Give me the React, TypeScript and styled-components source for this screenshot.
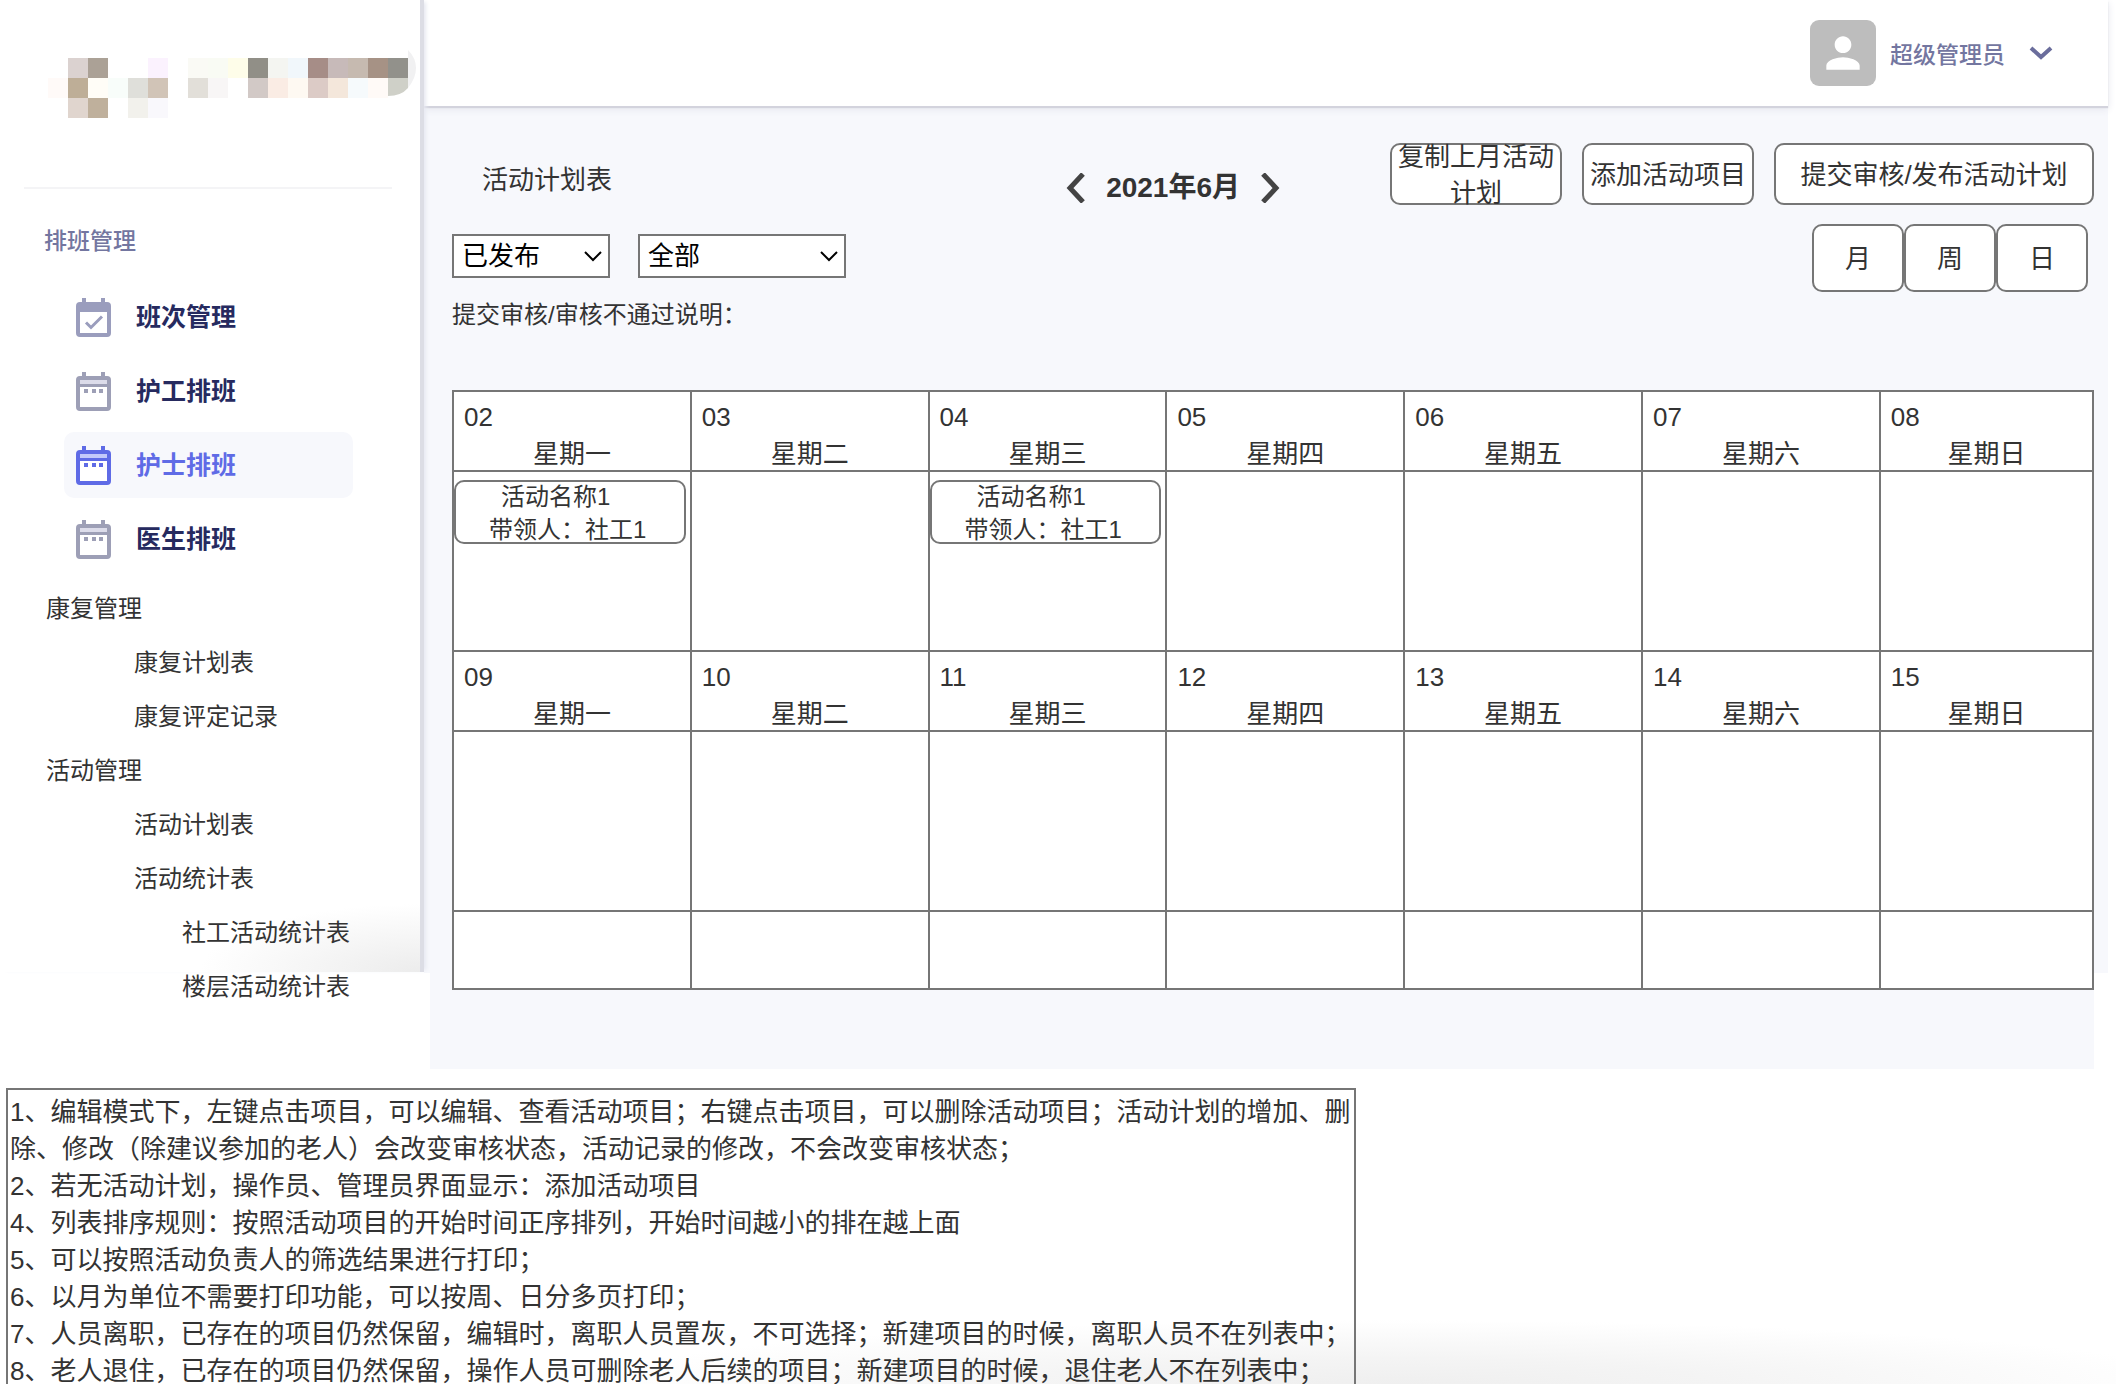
import React from "react";
import styled, { createGlobalStyle, css } from "styled-components";

const ink = "#333333";
const line = "#767676";
const surface = "#f7f8fc";
const muted = "#7376a0";
const navy = "#262a5f";
const accent = "#5f6be6";

const GlobalStyle = createGlobalStyle`
  *, *::before, *::after { box-sizing: border-box; }
  body {
    margin: 0;
    background: #ffffff;
    color: ${ink};
    font-family: "Liberation Sans", "Noto Sans CJK SC", sans-serif;
    font-size: 26px;
    line-height: 36px;
  }
  button, select { font: inherit; color: inherit; }
  ul, ol, p, h1, h2 { margin: 0; padding: 0; font: inherit; }
  ul, ol { list-style: none; }
  a { color: inherit; text-decoration: none; }
`;

const Page = styled.div`
  height: 100vh;
  overflow: hidden;
  background: radial-gradient(ellipse 38% 64px at 66% 100%, #efefef, #f4f4f4 40%, rgba(255, 255, 255, 0)) no-repeat;
`;

const Shell = styled.div`
  display: flex;
  align-items: flex-start;
  padding-right: 8px;
`;

/* ---------- sidebar ---------- */

const Sidebar = styled.nav`
  flex: none;
  width: 424px;
`;

const SidebarPanel = styled.div`
  position: relative;
  z-index: 1;
  padding-bottom: 12px;
  border-right: 4px solid #dcdde5;
  background: radial-gradient(ellipse 220px 68px at 100% 100%, #ececec, rgba(255, 255, 255, 0));
  background-color: #ffffff;
  box-shadow: 4px 0 4px -2px #e6e8f1;
`;

const Brand = styled.div`
  margin: 0 28px 0 24px;
  height: 189px;
  padding: 48px 0 0 24px;
  border-bottom: 2px solid #f4f4f6;

  svg {
    display: block;
    overflow: visible;
  }
`;

const GroupTitle = styled.h2`
  padding: 34px 0 25px 44px;
  font-size: 23px;
  font-weight: 500;
  color: ${muted};
`;

const IconMenu = styled.ul`
  display: flex;
  flex-direction: column;
  gap: 8px;
  padding: 0 67px 0 64px;
`;

const IconLink = styled.a<{ $active?: boolean }>`
  display: flex;
  align-items: center;
  gap: 25px;
  height: 66px;
  padding-left: 12px;
  border-radius: 10px;
  font-size: 25px;
  font-weight: 700;
  color: ${(p) => (p.$active ? accent : navy)};
  background: ${(p) => (p.$active ? surface : "transparent")};
`;

const TextMenu = styled.ul`
  padding-top: 10px;
`;

const levels = [46, 134, 182];

const TextLink = styled.a<{ $level: number }>`
  display: block;
  padding-left: ${(p) => levels[p.$level]}px;
  font-size: 24px;
  line-height: 54px;
`;

const LastLink = styled(TextLink)`
  line-height: 30px;
`;

/* ---------- header ---------- */

const Content = styled.div`
  flex: 1;
  min-width: 0;
`;

const Header = styled.header`
  position: relative;
  display: flex;
  justify-content: flex-end;
  align-items: center;
  height: 106px;
  padding-right: 53px;
  background: #ffffff;
  box-shadow: 0 2px 1px #d3d3dd, 0 3px 8px #e4e5ee;
`;

const UserButton = styled.button`
  display: flex;
  align-items: center;
  padding: 0;
  border: 0;
  background: none;
  font-size: 23px;
  font-weight: 500;
  color: ${muted};
`;

const Avatar = styled.span`
  display: grid;
  place-items: center;
  width: 66px;
  height: 66px;
  margin-right: 14px;
  border-radius: 9px;
  background: #bdbdbd;
`;

const UserName = styled.span`
  margin-right: 22px;
  padding-top: 4px;
`;

/* ---------- main ---------- */

const Main = styled.main`
  padding: 36px 14px 79px 28px;
  background:
    linear-gradient(${surface}, ${surface}) 0 0 / 100% calc(100% - 96px) no-repeat,
    linear-gradient(${surface}, ${surface}) 6px 100% / calc(100% - 20px) 100px no-repeat;
`;

const TopRow = styled.div`
  display: flex;
  align-items: flex-start;
  height: 64px;
`;

const Title = styled.h1`
  flex: 1;
  padding: 20px 0 0 30px;
`;

const MonthNav = styled.div`
  display: flex;
  align-items: center;
  gap: 20px;
  margin-top: 28px;
  font-size: 28px;
  font-weight: 700;
`;

const ArrowButton = styled.button`
  display: flex;
  padding: 0;
  border: 0;
  background: none;
`;

const Actions = styled.div`
  display: flex;
  gap: 20px;
  margin: 1px 0 0 110px;
`;

const box = css`
  border: 2px solid ${line};
  border-radius: 10px;
  background: #ffffff;
`;

const ActionButton = styled.button<{ $wide?: boolean }>`
  ${box}
  display: flex;
  align-items: center;
  justify-content: center;
  width: ${(p) => (p.$wide ? 320 : 172)}px;
  height: 62px;
  padding: 2px 4px 0;
`;

const FilterRow = styled.div`
  display: flex;
  justify-content: space-between;
  align-items: flex-start;
  margin-top: 18px;
  padding-right: 6px;
`;

const Filters = styled.div`
  display: flex;
  gap: 28px;
  padding-top: 10px;
`;

const SelectBox = styled.label<{ $wide?: boolean }>`
  display: grid;
  align-items: center;
  width: ${(p) => (p.$wide ? 208 : 158)}px;

  > * {
    grid-area: 1 / 1;
  }

  svg {
    justify-self: end;
    margin-right: 8px;
    pointer-events: none;
  }
`;

const Select = styled.select`
  appearance: none;
  width: 100%;
  height: 44px;
  padding: 0 8px;
  border: 2px solid ${line};
  border-radius: 0;
  background: #ffffff;
  color: #000000;
`;

const ReviewNote = styled.p`
  margin-top: 19px;
  font-size: 24px;
`;

const ViewSwitch = styled.div`
  display: flex;
`;

const ViewButton = styled.button`
  ${box}
  width: 92px;
  height: 68px;
  padding: 2px 0 0;
`;

const Calendar = styled.table`
  width: 100%;
  margin-top: 57px;
  table-layout: fixed;
  border-collapse: collapse;
  background: #ffffff;
`;

const DayCol = styled.col`
  width: 14.5%;
`;

const DayHead = styled.th`
  height: 80px;
  padding: 6px 0 0;
  border: 2px solid ${line};
  font-weight: 400;
  line-height: 36px;
  vertical-align: top;
`;

const DayNumber = styled.span`
  display: block;
  padding-left: 10px;
  line-height: 38px;
  text-align: left;
`;

const Weekday = styled.span`
  display: block;
  height: 34px;
`;

const DayCell = styled.td<{ $short?: boolean }>`
  height: ${(p) => (p.$short ? 78 : 180)}px;
  padding: 8px 4px 0 0;
  border: 2px solid ${line};
  vertical-align: top;
`;

const EventCard = styled.button`
  ${box}
  display: block;
  width: 100%;
  height: 64px;
  padding: 0 0 0 33px;
  font-size: 24px;
  text-align: left;
  white-space: nowrap;
`;

const EventLine = styled.span<{ $indent?: boolean }>`
  display: block;
  padding-left: ${(p) => (p.$indent ? 12 : 0)}px;
  line-height: 30px;

  & + & {
    line-height: 36px;
  }
`;

/* ---------- notes ---------- */

const Notes = styled.ol`
  width: 1350px;
  max-width: calc(100% - 12px);
  margin: 19px 0 0 6px;
  padding: 4px 0 12px 2px;
  border: 2px solid ${line};
  line-height: 37px;
`;

/* ---------- drawings ---------- */

const mosaic: Array<Array<[number, string]>> = [
  [
    [1, "#dbd2d0"], [2, "#aba196"], [5, "#fbf2fe"], [7, "#fafaf5"], [8, "#f9fbf4"], [9, "#fefde9"],
    [10, "#918f87"], [11, "#f4f5f1"], [12, "#f1f7fb"], [13, "#a68d87"], [14, "#c7bab9"],
    [15, "#c6bab0"], [16, "#a69285"], [17, "#92918b"],
  ],
  [
    [0, "#fffaf8"], [1, "#beae97"], [2, "#fffdf7"], [3, "#f8fdfa"], [4, "#dfdfda"], [5, "#d1c4b7"],
    [7, "#e2dfd9"], [8, "#f8f6f6"], [10, "#d2c9c6"], [11, "#faece4"], [12, "#fef9f2"],
    [13, "#dccbc6"], [14, "#f4e7db"], [15, "#f6fafc"], [16, "#fffaf7"],
  ],
  [[1, "#e0d5ce"], [2, "#bfb09c"], [4, "#f2f1ec"], [5, "#f9f8fc"]],
];

const BrandMark = () => (
  <svg width="368" height="72" viewBox="0 -10 368 72" shapeRendering="crispEdges" aria-hidden="true">
    {mosaic.map((row, y) =>
      row.map(([x, fill]) => <rect key={`${x}-${y}`} x={x * 20} y={y * 20} width="20" height="20" fill={fill} />),
    )}
    <path d="M340 20h20v10q-7 8-20 8z" fill="#cfd0c8" shapeRendering="auto" />
    <path d="M360-8q8 8 8 18t-8 20z" fill="#f1f1f2" shapeRendering="auto" />
  </svg>
);

const CalendarIcon = ({ active, checked }: { active?: boolean; checked?: boolean }) => {
  const main = active ? accent : checked ? "#9a9dbd" : "#9d9fb6";
  return (
    <svg width="35" height="39" viewBox="0 0 35 39" aria-hidden="true">
      <path d="M6 0h4v6H6zM25 0h4v6h-4z" fill={main} />
      <rect x="2" y="6" width="31" height="31" rx="2" fill="#fff" stroke={main} strokeWidth="4" />
      {checked ? (
        <>
          <path d="M2 6h31v8H2z" fill={main} />
          <path d="M10 24.5l5 5 11-11" fill="none" stroke={main} strokeWidth="3" />
        </>
      ) : (
        <>
          <path d="M4 8h27v4H4z" fill={active ? "#c3c9fa" : "#dcdcea"} />
          <path d="M4 12h27v3H4z" fill={main} />
          <path d="M8 17h4v4H8zM16 17h4v4h-4zM23 17h4v4h-4z" fill={main} />
        </>
      )}
    </svg>
  );
};

const PersonIcon = () => (
  <svg width="50" height="50" viewBox="0 0 24 24" fill="#fff" aria-hidden="true">
    <path d="M12 12c2.21 0 4-1.79 4-4s-1.79-4-4-4-4 1.79-4 4 1.79 4 4 4zm0 2c-2.67 0-8 1.34-8 4v2h16v-2c0-2.66-5.33-4-8-4z" />
  </svg>
);

const UserChevron = () => (
  <svg width="28" height="20" viewBox="0 0 28 20" fill="none" stroke="#6a6d9c" strokeWidth="4" aria-hidden="true">
    <path d="M4 5l10 9 10-9" />
  </svg>
);

const SelectChevron = () => (
  <svg width="18" height="12" viewBox="0 0 18 12" fill="none" stroke="#000" strokeWidth="2" aria-hidden="true">
    <path d="M1 2l8 8 8-8" />
  </svg>
);

const Arrow = ({ next }: { next?: boolean }) => (
  <svg width="20" height="30" viewBox="0 0 20 30" fill="none" stroke="#444" strokeWidth="5" aria-hidden="true">
    <path d={next ? "M3 1l13 14L3 29" : "M17 1L4 15l13 14"} />
  </svg>
);

/* ---------- data ---------- */

const shifts = [
  { label: "班次管理", checked: true },
  { label: "护工排班" },
  { label: "护士排班", active: true },
  { label: "医生排班" },
];

const links = [
  { label: "康复管理", level: 0 },
  { label: "康复计划表", level: 1 },
  { label: "康复评定记录", level: 1 },
  { label: "活动管理", level: 0 },
  { label: "活动计划表", level: 1 },
  { label: "活动统计表", level: 1 },
  { label: "社工活动统计表", level: 2 },
];

const weekdays = ["星期一", "星期二", "星期三", "星期四", "星期五", "星期六", "星期日"];

const weeks = [
  { days: ["02", "03", "04", "05", "06", "07", "08"], busy: [0, 2] },
  { days: ["09", "10", "11", "12", "13", "14", "15"], busy: [] as number[] },
];

const notes = [
  "1、编辑模式下，左键点击项目，可以编辑、查看活动项目；右键点击项目，可以删除活动项目；活动计划的增加、删除、修改（除建议参加的老人）会改变审核状态，活动记录的修改，不会改变审核状态；",
  "2、若无活动计划，操作员、管理员界面显示：添加活动项目",
  "4、列表排序规则：按照活动项目的开始时间正序排列，开始时间越小的排在越上面",
  "5、可以按照活动负责人的筛选结果进行打印；",
  "6、以月为单位不需要打印功能，可以按周、日分多页打印；",
  "7、人员离职，已存在的项目仍然保留，编辑时，离职人员置灰，不可选择；新建项目的时候，离职人员不在列表中；",
  "8、老人退住，已存在的项目仍然保留，操作人员可删除老人后续的项目；新建项目的时候，退住老人不在列表中；",
];

export default function App() {
  return (
    <Page>
      <GlobalStyle />
      <Shell>
        <Sidebar>
          <SidebarPanel>
            <Brand>
              <BrandMark />
            </Brand>
            <GroupTitle>排班管理</GroupTitle>
            <IconMenu>
              {shifts.map((s) => (
                <li key={s.label}>
                  <IconLink href="#" $active={s.active}>
                    <CalendarIcon active={s.active} checked={s.checked} />
                    {s.label}
                  </IconLink>
                </li>
              ))}
            </IconMenu>
            <TextMenu>
              {links.map((l) => (
                <li key={l.label}>
                  <TextLink href="#" $level={l.level}>{l.label}</TextLink>
                </li>
              ))}
            </TextMenu>
          </SidebarPanel>
          <LastLink href="#" $level={2}>楼层活动统计表</LastLink>
        </Sidebar>

        <Content>
          <Header>
            <UserButton type="button">
              <Avatar><PersonIcon /></Avatar>
              <UserName>超级管理员</UserName>
              <UserChevron />
            </UserButton>
          </Header>

          <Main>
            <TopRow>
              <Title>活动计划表</Title>
              <MonthNav>
                <ArrowButton type="button" aria-label="上个月"><Arrow /></ArrowButton>
                <span>2021年6月</span>
                <ArrowButton type="button" aria-label="下个月"><Arrow next /></ArrowButton>
              </MonthNav>
              <Actions>
                <ActionButton type="button">复制上月活动计划</ActionButton>
                <ActionButton type="button">添加活动项目</ActionButton>
                <ActionButton type="button" $wide>提交审核/发布活动计划</ActionButton>
              </Actions>
            </TopRow>

            <FilterRow>
              <div>
                <Filters>
                  <SelectBox>
                    <Select aria-label="发布状态" defaultValue="已发布">
                      <option>已发布</option>
                    </Select>
                    <SelectChevron />
                  </SelectBox>
                  <SelectBox $wide>
                    <Select aria-label="负责人" defaultValue="全部">
                      <option>全部</option>
                    </Select>
                    <SelectChevron />
                  </SelectBox>
                </Filters>
                <ReviewNote>提交审核/审核不通过说明：</ReviewNote>
              </div>
              <ViewSwitch>
                <ViewButton type="button">月</ViewButton>
                <ViewButton type="button">周</ViewButton>
                <ViewButton type="button">日</ViewButton>
              </ViewSwitch>
            </FilterRow>

            <Calendar>
              <colgroup>
                {weekdays.slice(0, 6).map((w) => <DayCol key={w} />)}
                <col />
              </colgroup>
              <tbody>
                {weeks.map((week) => (
                  <React.Fragment key={week.days[0]}>
                    <tr>
                      {week.days.map((d, i) => (
                        <DayHead key={d} scope="col">
                          <DayNumber>{d}</DayNumber>
                          <Weekday>{weekdays[i]}</Weekday>
                        </DayHead>
                      ))}
                    </tr>
                    <tr>
                      {week.days.map((d, i) => (
                        <DayCell key={d}>
                          {week.busy.includes(i) && (
                            <EventCard type="button">
                              <EventLine $indent>活动名称1</EventLine>
                              <EventLine>带领人：社工1</EventLine>
                            </EventCard>
                          )}
                        </DayCell>
                      ))}
                    </tr>
                  </React.Fragment>
                ))}
                <tr>
                  {weekdays.map((w) => <DayCell key={w} $short />)}
                </tr>
              </tbody>
            </Calendar>
          </Main>
        </Content>
      </Shell>

      <Notes>
        {notes.map((n) => <li key={n}>{n}</li>)}
      </Notes>
    </Page>
  );
}
